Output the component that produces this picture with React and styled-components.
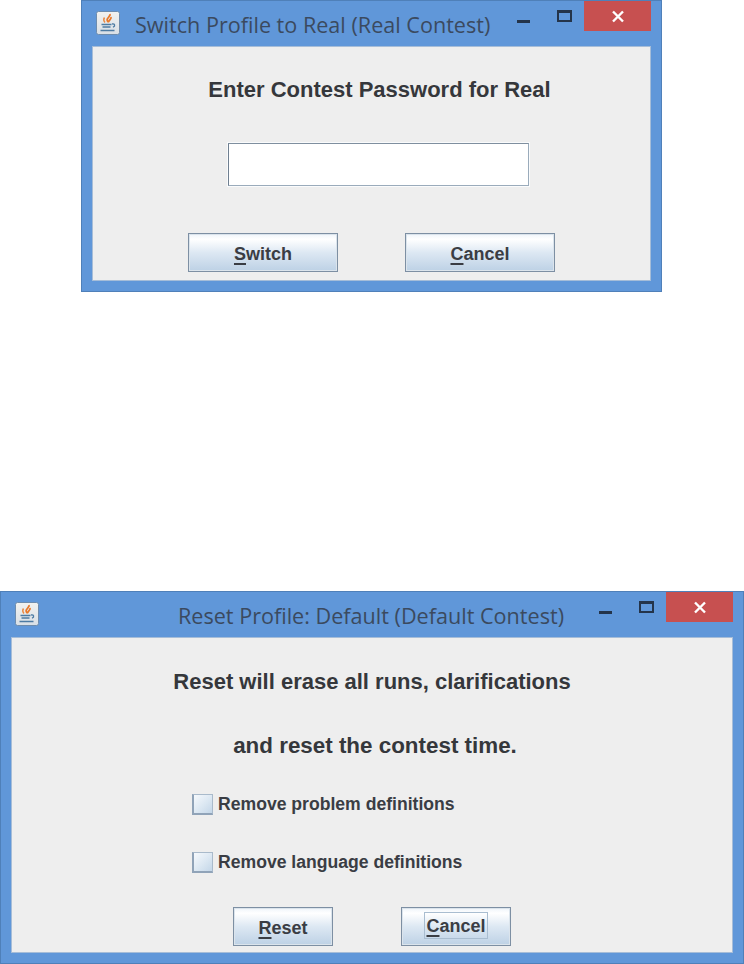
import React from 'react';
import styled, { createGlobalStyle } from 'styled-components';

const Global = createGlobalStyle`
  html, body { margin: 0; padding: 0; background: #fff; }
`;

const Page = styled.div`
  width: 744px;
  height: 964px;
  display: flex;
  flex-direction: column;
  justify-content: space-between;
  align-items: flex-end;
  overflow: hidden;
`;

const Window = styled.div`
  box-sizing: border-box;
  width: ${p => p.$width}px;
  height: ${p => p.$height}px;
  margin-right: ${p => p.$right || 0}px;
  background: #6097d9;
  border: 1px solid #4f80b9;
  display: flex;
  flex-direction: column;
`;

const TitleBar = styled.div`
  height: 45px;
  flex: none;
  display: flex;
  align-items: flex-start;
  padding-left: 14px;
`;

const IconWrap = styled.div`
  width: 24px;
  height: 24px;
  margin-top: 10px;
  flex: none;
`;

const Title = styled.div`
  font-family: "Open Sans", "Noto Sans", sans-serif;
  font-size: 21.6px;
  line-height: 26px;
  margin-top: 11px;
  color: #3b4a5f;
  white-space: nowrap;
  ${p => p.$center ? 'flex: 1; text-align: center; padding-left: 117px;' : 'margin-left: 15px; flex: 1;'}
`;

const Controls = styled.div`
  display: flex;
  flex: none;
  align-items: flex-start;
  margin-right: 10px;
`;

const ControlCell = styled.div`
  width: 40px;
  height: 30px;
  display: flex;
  justify-content: center;
`;

const MinGlyph = styled.div`
  width: 13px;
  height: 3px;
  margin: 19px 2px 0 0;
  background: #24344a;
`;

const MaxGlyph = styled.div`
  box-sizing: border-box;
  width: 15px;
  height: 12px;
  margin-top: 9px;
  border: 2px solid #24344a;
  border-top-width: 3px;
`;

const CloseButton = styled.div`
  width: 67px;
  height: 30px;
  background: #c75050;
  display: flex;
  align-items: center;
  justify-content: center;
`;

const Panel = styled.div`
  flex: 1;
  margin: 0 10px 10px;
  background: #eeeeee;
  border: 1px solid #a6bdd8;
  box-sizing: border-box;
  display: flex;
  flex-direction: column;
  align-items: center;
  font-family: "Liberation Sans", Arial, sans-serif;
  color: #35373b;
`;

const Heading = styled.div`
  font-size: ${p => p.$size || 22}px;
  line-height: 20px;
  font-weight: bold;
  margin-top: ${p => p.$top}px;
  margin-left: ${p => p.$shift || 0}px;
  white-space: nowrap;
`;

const PasswordInput = styled.input`
  box-sizing: border-box;
  display: block;
  width: 301px;
  height: 43px;
  margin: 43px 0 0 14px;
  background: #fff;
  border: 1px solid #9aabbb;
  border-left-color: #6f7f90;
  border-top-color: #7f8f9f;
  outline: 0;
  box-shadow: 0 0 0 1px #fafbfc;
`;

const ButtonRow = styled.div`
  display: flex;
  justify-content: center;
  gap: ${p => p.$gap}px;
  margin-top: ${p => p.$top}px;
`;

const Btn = styled.button`
  box-sizing: border-box;
  width: ${p => p.$width}px;
  height: 39px;
  padding: 3px 0 0;
  border: 1px solid #7d8fa3;
  box-shadow: inset 0 0 0 1px #dbe4ec;
  background: linear-gradient(#eef4fa 0%, #ffffff 14%, #dde8f3 50%, #bdd1e5 100%);
  font-family: "Liberation Sans", Arial, sans-serif;
  font-size: 18px;
  font-weight: bold;
  color: #3a3d44;
  display: flex;
  align-items: center;
  justify-content: center;
`;

const Focus = styled.span`
  box-sizing: border-box;
  display: block;
  margin-top: -5px;
  padding: 2px 1px 0;
  line-height: 23px;
  border: 1px solid #a9bdd0;
`;

const Key = styled.span`
  text-decoration: underline;
  text-underline-offset: 3px;
  text-decoration-thickness: 2px;
`;

const CheckList = styled.div`
  align-self: flex-start;
  margin-left: 180px;
  margin-top: 38px;
  display: flex;
  flex-direction: column;
  gap: 38px;
`;

const CheckRow = styled.label`
  display: flex;
  align-items: center;
  gap: 5px;
  height: 20px;
  font-size: 17.6px;
  font-weight: bold;
  color: #3a3d44;
  white-space: nowrap;
`;

const CheckBox = styled.span`
  box-sizing: border-box;
  display: block;
  width: 21px;
  height: 21px;
  flex: none;
  border: 2px solid #90a3b8;
  border-right: 1px solid #a9bacb;
  border-top: 1px solid #a9bacb;
  background: linear-gradient(135deg, #f6f9fc 0%, #dbe7f2 55%, #c3d6e8 100%);
`;

const JavaIcon = () => (
  <svg width="24" height="24" viewBox="0 0 24 24">
    <defs>
      <linearGradient id="javaBg" x1="0" y1="0" x2="0" y2="1">
        <stop offset="0" stopColor="#f2f2f0" />
        <stop offset="1" stopColor="#d8dfe6" />
      </linearGradient>
    </defs>
    <rect x="0.5" y="0.5" width="23" height="23" rx="2" fill="url(#javaBg)" stroke="#6d8cae" />
    <path d="M14 3c1 2.200-3.500 3.800-2.800 6.200.2.800.8 1.400 1.300 2.100-.3-1.700 3.200-3.100 2.500-5.300" fill="none" stroke="#e8792b" strokeWidth="1.800" />
    <path d="M8.500 6.500c-1 1.500-1 3.500.5 5" fill="none" stroke="#ea8a44" strokeWidth="1.400" />
    <path d="M5.500 13.500h10M6.500 16h8M4.500 19.500h14" fill="none" stroke="#4d7ba3" strokeWidth="1.400" />
    <path d="M16 13c2.800-.5 3.800 1.700 1 3.300" fill="none" stroke="#4d7ba3" strokeWidth="1.300" />
  </svg>
);

const WindowControls = () => (
  <Controls>
    <ControlCell><MinGlyph /></ControlCell>
    <ControlCell><MaxGlyph /></ControlCell>
    <CloseButton>
      <svg width="14" height="13" viewBox="0 0 14 13">
        <path d="M2 1.5l10 10M12 1.5l-10 10" stroke="#fff" strokeWidth="2.4" fill="none" />
      </svg>
    </CloseButton>
  </Controls>
);

export default function App() {
  return (
    <Page>
      <Global />
      <Window $width={581} $height={292} $right={82}>
        <TitleBar>
          <IconWrap><JavaIcon /></IconWrap>
          <Title>Switch Profile to Real (Real Contest)</Title>
          <WindowControls />
        </TitleBar>
        <Panel>
          <Heading $top={33} $shift={16}>Enter Contest Password for Real</Heading>
          <PasswordInput type="password" />
          <ButtonRow $gap={67} $top={47}>
            <Btn $width={150}><span><Key>S</Key>witch</span></Btn>
            <Btn $width={150}><span><Key>C</Key>ancel</span></Btn>
          </ButtonRow>
        </Panel>
      </Window>

      <Window $width={744} $height={373}>
        <TitleBar>
          <IconWrap><JavaIcon /></IconWrap>
          <Title $center>Reset Profile: Default (Default Contest)</Title>
          <WindowControls />
        </TitleBar>
        <Panel>
          <Heading $top={34}>Reset will erase all runs, clarifications</Heading>
          <Heading $top={44} $shift={6} $size={22.4}>and reset the contest time.</Heading>
          <CheckList>
            <CheckRow><CheckBox />Remove problem definitions</CheckRow>
            <CheckRow><CheckBox />Remove language definitions</CheckRow>
          </CheckList>
          <ButtonRow $gap={68} $top={35}>
            <Btn $width={100}><span><Key>R</Key>eset</span></Btn>
            <Btn $width={110}><Focus><Key>C</Key>ancel</Focus></Btn>
          </ButtonRow>
        </Panel>
      </Window>
    </Page>
  );
}
